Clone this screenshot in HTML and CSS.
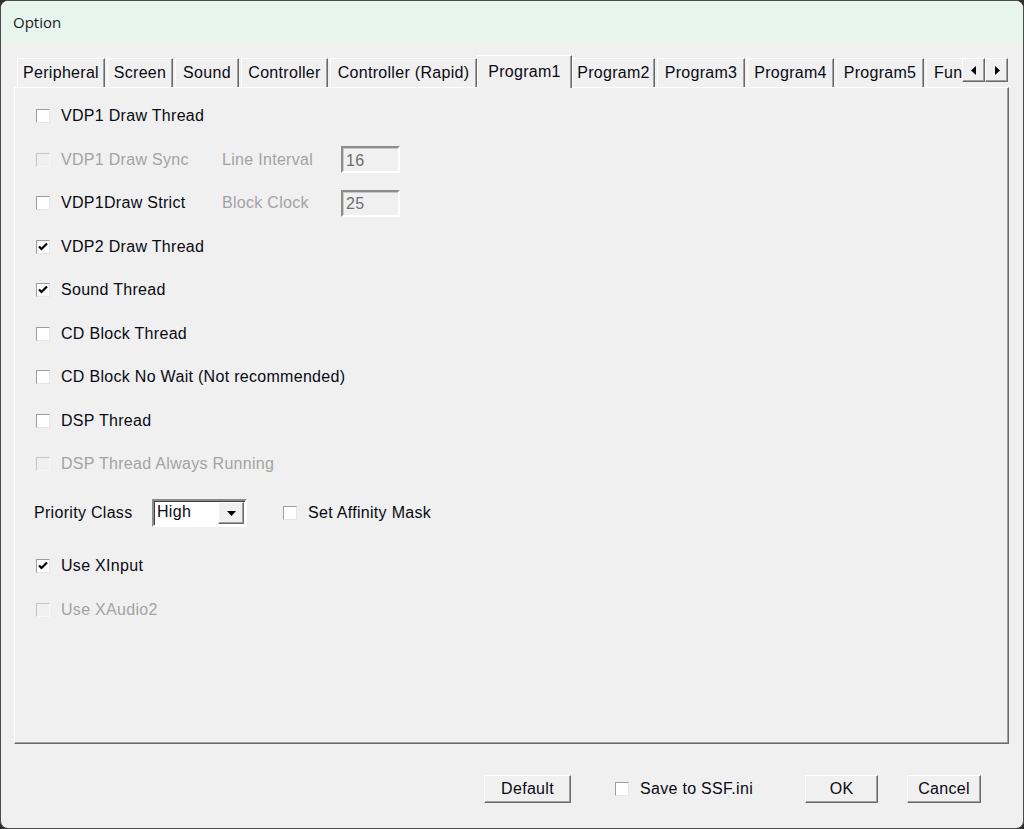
FILE: index.html
```html
<!DOCTYPE html>
<html lang="en">
<head>
    <meta charset="UTF-8">
    <title>Option</title>
    <link rel="stylesheet" href="styles.css">
</head>
<body>
    <div class="window">
        <div class="titlebar">Option</div>

        <div class="content">
            <div class="tabstrip">
                <div class="tabs">
                    <div class="tab">Peripheral</div>
                    <div class="tab">Screen</div>
                    <div class="tab">Sound</div>
                    <div class="tab">Controller</div>
                    <div class="tab">Controller (Rapid)</div>
                    <div class="tab selected">Program1</div>
                    <div class="tab">Program2</div>
                    <div class="tab">Program3</div>
                    <div class="tab">Program4</div>
                    <div class="tab">Program5</div>
                    <div class="tab">Fun</div>
                </div>
                <div class="spin">
                    <div class="spin-btn">
                        <svg width="6" height="9" viewBox="0 0 6 9"><path d="M5 0v9L0 4.5z" fill="#000"/></svg>
                    </div>
                    <div class="spin-btn">
                        <svg width="6" height="9" viewBox="0 0 6 9"><path d="M1 0v9l5-4.5z" fill="#000"/></svg>
                    </div>
                </div>
            </div>

            <div class="panel">
                <div class="row">
                    <label class="opt"><span class="box"></span>VDP1 Draw Thread</label>
                </div>
                <div class="row">
                    <label class="opt fixed disabled"><span class="box"></span>VDP1 Draw Sync</label>
                    <span class="field-label">Line Interval</span>
                    <span class="num">16</span>
                </div>
                <div class="row">
                    <label class="opt fixed"><span class="box"></span>VDP1Draw Strict</label>
                    <span class="field-label">Block Clock</span>
                    <span class="num">25</span>
                </div>
                <div class="row">
                    <label class="opt"><span class="box"><svg class="tick" width="12" height="12" viewBox="0 0 12 12"><path d="M2 5.5l2.5 2.5 5.5-5.5" fill="none" stroke="#000" stroke-width="2.2"/></svg></span>VDP2 Draw Thread</label>
                </div>
                <div class="row">
                    <label class="opt"><span class="box"><svg class="tick" width="12" height="12" viewBox="0 0 12 12"><path d="M2 5.5l2.5 2.5 5.5-5.5" fill="none" stroke="#000" stroke-width="2.2"/></svg></span>Sound Thread</label>
                </div>
                <div class="row">
                    <label class="opt"><span class="box"></span>CD Block Thread</label>
                </div>
                <div class="row">
                    <label class="opt"><span class="box"></span>CD Block No Wait (Not recommended)</label>
                </div>
                <div class="row">
                    <label class="opt"><span class="box"></span>DSP Thread</label>
                </div>
                <div class="row">
                    <label class="opt disabled"><span class="box"></span>DSP Thread Always Running</label>
                </div>
                <div class="row priority">
                    <span class="plain-label">Priority Class</span>
                    <div class="combo">
                        <span class="combo-text">High</span>
                        <span class="combo-btn">
                            <svg width="9" height="5" viewBox="0 0 9 5"><path d="M0 0h9L4.5 5z" fill="#000"/></svg>
                        </span>
                    </div>
                    <label class="opt affinity"><span class="box"></span>Set Affinity Mask</label>
                </div>
                <div class="row xinput">
                    <label class="opt"><span class="box"><svg class="tick" width="12" height="12" viewBox="0 0 12 12"><path d="M2 5.5l2.5 2.5 5.5-5.5" fill="none" stroke="#000" stroke-width="2.2"/></svg></span>Use XInput</label>
                </div>
                <div class="row">
                    <label class="opt disabled"><span class="box"></span>Use XAudio2</label>
                </div>
            </div>

            <div class="footer">
                <div class="btn btn-default">Default</div>
                <label class="opt save"><span class="box"></span>Save to SSF.ini</label>
                <div class="btn btn-ok">OK</div>
                <div class="btn btn-cancel">Cancel</div>
            </div>
        </div>
    </div>
</body>
</html>
```

FILE: styles.css
```css
html {
    background: #2f2f2f;
}

body {
    margin: 0;
    font-family: "Liberation Sans", Arial, sans-serif;
    font-size: 16px;
    letter-spacing: 0.3px;
    color: #0a0a14;
}

.window {
    box-sizing: border-box;
    width: 1024px;
    height: 829px;
    border: 1px solid #4a4a4a;
    border-radius: 8px;
    background: #f0f0f0;
    overflow: hidden;
    display: flex;
    flex-direction: column;
}

.titlebar {
    height: 42px;
    background: #e8f5ef;
    padding-left: 12px;
    display: flex;
    align-items: center;
    font-family: "Open Sans", "Noto Sans", sans-serif;
    font-size: 15px;
    letter-spacing: 0;
    color: #1a1a1a;
}

.content {
    padding: 12px 0 0 13px;
}

/* tabs */
.tabstrip {
    position: relative;
    z-index: 1;
    height: 33px;
    display: flex;
    padding-left: 3px;
}

.tabs {
    width: 945px;
    overflow: hidden;
    display: grid;
    grid-template-columns: 88px 66px 64px 87px 147px 91px 83px 88px 87px 88px 80px;
    column-gap: 2px;
    align-items: start;
}

.tab {
    box-sizing: border-box;
    height: 29px;
    margin-top: 3px;
    border-top: 1px solid #fff;
    border-left: 1px solid #fff;
    border-right: 1px solid #696969;
    box-shadow: inset -1px 0 #a0a0a0;
    background: #f0f0f0;
    display: flex;
    align-items: center;
    justify-content: center;
    white-space: nowrap;
    padding-bottom: 1px;
}

.tab:last-child {
    justify-content: flex-start;
    padding-left: 7px;
}

.tab.selected {
    height: 33px;
    margin: 0 -2px;
    padding-bottom: 1px;
}

.spin {
    display: flex;
    margin-top: 3px;
}

.spin-btn {
    box-sizing: border-box;
    width: 23px;
    height: 24px;
    background: #f0f0f0;
    border-top: 1px solid #fff;
    border-left: 1px solid #fff;
    border-right: 1px solid #696969;
    border-bottom: 1px solid #696969;
    box-shadow: inset -1px -1px #a0a0a0;
    display: flex;
    align-items: center;
    justify-content: center;
}

/* page */
.panel {
    box-sizing: border-box;
    width: 995px;
    height: 657px;
    margin-top: -1px;
    border-top: 1px solid #fff;
    border-left: 1px solid #fff;
    border-right: 1px solid #696969;
    border-bottom: 1px solid #696969;
    box-shadow: inset -1px -1px #a0a0a0;
    padding: 14px 0 0 21px;
    display: flex;
    flex-direction: column;
    gap: 15.5px;
}

.row {
    height: 28px;
    display: flex;
    align-items: center;
}

.row.priority {
    margin-top: 5.5px;
    margin-left: -2px;
}

.row.xinput {
    margin-top: 9.5px;
}

.opt {
    display: flex;
    align-items: center;
    gap: 11px;
    white-space: nowrap;
}

.opt.fixed {
    width: 186px;
}

.opt.disabled,
.field-label {
    color: #a3a3a3;
}

.box {
    box-sizing: border-box;
    flex: none;
    width: 14px;
    height: 14px;
    background: #fff;
    border: 1px solid;
    border-color: #9c9c9c #e6e6e6 #e6e6e6 #9c9c9c;
    display: flex;
    align-items: center;
    justify-content: center;
}

.opt.disabled .box {
    background: #f0f0f0;
    border-color: #c4c4c4 #f8f8f8 #f8f8f8 #c4c4c4;
}

.tick {
    display: block;
}

.field-label {
    width: 119px;
}

.num {
    box-sizing: border-box;
    width: 59px;
    height: 27px;
    border: 2px solid;
    border-color: #8c8c8c #fff #fff #8c8c8c;
    box-shadow: inset 1px 1px #c8c8c8;
    padding: 2px 0 0 3px;
    color: #6d6d6d;
    display: flex;
    align-items: center;
}

.plain-label {
    width: 118px;
}

.combo {
    box-sizing: border-box;
    width: 95px;
    height: 28px;
    background: #fff;
    border: 2px solid;
    border-color: #8c8c8c #fff #fff #8c8c8c;
    box-shadow: inset 1px 1px #404040;
    display: flex;
    align-items: center;
    justify-content: space-between;
    padding: 0 1px 0 3px;
}

.combo-text {
    margin-top: -2px;
}

.combo-btn {
    box-sizing: border-box;
    width: 26px;
    height: 22px;
    background: #f0f0f0;
    border-top: 1px solid #fff;
    border-left: 1px solid #fff;
    border-right: 1px solid #696969;
    border-bottom: 1px solid #696969;
    box-shadow: inset -1px -1px #a0a0a0;
    display: flex;
    align-items: center;
    justify-content: center;
}

.opt.affinity {
    margin-left: 36px;
}

/* buttons */
.footer {
    display: flex;
    align-items: center;
    margin-top: 31px;
    padding-left: 470px;
}

.btn {
    box-sizing: border-box;
    height: 28px;
    background: #f0f0f0;
    border-top: 1px solid #fff;
    border-left: 1px solid #fff;
    border-right: 1px solid #696969;
    border-bottom: 1px solid #696969;
    box-shadow: inset -1px -1px #a0a0a0;
    display: flex;
    align-items: center;
    justify-content: center;
    padding-bottom: 1px;
}

.btn-default {
    width: 87px;
}

.opt.save {
    margin-left: 44px;
    width: 190px;
}

.btn-ok {
    width: 73px;
}

.btn-cancel {
    width: 74px;
    margin-left: 29px;
}
```
